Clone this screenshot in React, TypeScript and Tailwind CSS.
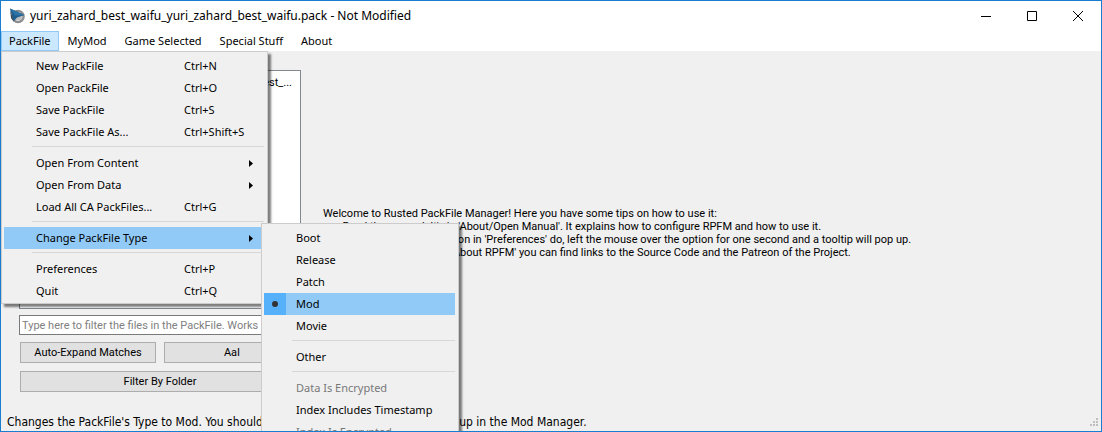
import type { ReactNode } from "react";

const tips = [
  "Welcome to Rusted PackFile Manager! Here you have some tips on how to use it:",
  "     - Read the manual. It's in 'About/Open Manual'. It explains how to configure RPFM and how to use it.",
  "     - To know what each option in 'Preferences' do, left the mouse over the option for one second and a tooltip will pop up.",
  "     - In the 'About' menu, in 'About RPFM' you can find links to the Source Code and the Patreon of the Project.",
];

function AppIcon() {
  return (
    <svg className="size-4" viewBox="0 0 16 16" aria-hidden="true">
      <circle cx="9" cy="8.5" r="5.6" fill="none" stroke="#8d8d8d" strokeWidth="2.4" />
      <circle cx="9" cy="8.5" r="4" fill="#b9bcbf" />
      <path d="M1 0.5 L15.5 7 L8 9.5 L4.5 13.5 Z" fill="#1d5c8c" />
      <path d="M1 0.5 L15.5 7 L6 7.5 Z" fill="#2d73a6" />
      <path d="M1 1 L4.500 13 L2 10 Z" fill="#35444f" />
    </svg>
  );
}

function CaptionButton({ label, children }: { label: string; children: ReactNode }) {
  return (
    <button type="button" aria-label={label} className="flex h-[29px] w-[46px] items-center justify-center">
      <svg className="h-[10px] w-[10px]" viewBox="0 0 10 10" fill="none" stroke="#000" aria-hidden="true">
        {children}
      </svg>
    </button>
  );
}

function MenuSeparator() {
  return <div role="separator" className="mt-[3px] mb-[5px] ml-7 h-px bg-[#d7d7d7]" />;
}

type ItemProps = {
  label: string;
  shortcut?: string;
  arrow?: boolean;
  active?: boolean;
  checked?: boolean;
  disabled?: boolean;
};

function MenuItem({ label, shortcut, arrow, active, checked, disabled }: ItemProps) {
  return (
    <button
      type="button"
      role={checked ? "menuitemradio" : "menuitem"}
      aria-checked={checked}
      disabled={disabled}
      className={`flex h-[22px] w-full items-center text-left disabled:text-[#787878] ${active ? "bg-[#91c9f7]" : ""}`}
    >
      <span className={`mr-[10px] flex size-[22px] shrink-0 items-center justify-center ${checked ? "bg-[#56b0fa]" : ""}`}>
        {checked && <span className="size-[6px] rounded-full bg-[#333]" />}
      </span>
      <span className="flex-1 whitespace-nowrap">{label}</span>
      {shortcut && <span className="w-20 whitespace-nowrap">{shortcut}</span>}
      {arrow && (
        <svg className="mr-[11px] h-[7px] w-1" viewBox="0 0 4 7" aria-hidden="true">
          <path d="M0 0 L4 3.500 L0 7 Z" fill="#000" />
        </svg>
      )}
    </button>
  );
}

const popup =
  "absolute border border-[#ccc] bg-[#f0f0f0] pt-[3px] pr-[3px] pb-px pl-[2px] shadow-[3px_3px_2px_0px_rgba(0,0,0,0.5)]";

function TypeMenu() {
  return (
    <div role="menu" aria-label="Change PackFile Type" className={`${popup} -top-1 left-[257px] w-[198px]`}>
      <MenuItem label="Boot" />
      <MenuItem label="Release" />
      <MenuItem label="Patch" />
      <MenuItem label="Mod" active checked />
      <MenuItem label="Movie" />
      <MenuSeparator />
      <MenuItem label="Other" />
      <MenuSeparator />
      <MenuItem label="Data Is Encrypted" disabled />
      <MenuItem label="Index Includes Timestamp" />
      <MenuItem label="Index Is Encrypted" disabled />
    </div>
  );
}

function PackFileMenu() {
  return (
    <div role="menu" aria-label="PackFile" className={`${popup} top-full left-0 z-10 w-[267px]`}>
      <MenuItem label="New PackFile" shortcut="Ctrl+N" />
      <MenuItem label="Open PackFile" shortcut="Ctrl+O" />
      <MenuItem label="Save PackFile" shortcut="Ctrl+S" />
      <MenuItem label="Save PackFile As..." shortcut="Ctrl+Shift+S" />
      <MenuSeparator />
      <MenuItem label="Open From Content" arrow />
      <MenuItem label="Open From Data" arrow />
      <MenuItem label="Load All CA PackFiles..." shortcut="Ctrl+G" />
      <MenuSeparator />
      <div className="relative">
        <MenuItem label="Change PackFile Type" arrow active />
        <TypeMenu />
      </div>
      <MenuSeparator />
      <MenuItem label="Preferences" shortcut="Ctrl+P" />
      <MenuItem label="Quit" shortcut="Ctrl+Q" />
    </div>
  );
}

const pushButton = "h-[21px] border border-[#adadad] bg-[#e1e1e1] text-center";

export default function App() {
  return (
    <div className="flex h-screen flex-col overflow-hidden border border-[#1a7dcf] bg-[#f0f0f0] font-['Noto_Sans',sans-serif] text-[11px] leading-[16px] text-black">
      <header className="flex h-[30px] shrink-0 items-start bg-white pl-2">
        <div className="flex h-[30px] flex-1 items-center gap-[5px]">
          <AppIcon />
          <h1 className="text-[12px]">yuri_zahard_best_waifu_yuri_zahard_best_waifu.pack - Not Modified</h1>
        </div>
        <CaptionButton label="Minimize">
          <path d="M0 5.500 H10" />
        </CaptionButton>
        <CaptionButton label="Maximize">
          <path d="M0.500 0.500 H9.500 V9.500 H0.500 Z" />
        </CaptionButton>
        <CaptionButton label="Close">
          <path d="M0 0 L10 10 M10 0 L0 10" />
        </CaptionButton>
      </header>

      <nav className="relative flex h-5 shrink-0 bg-white">
        <button type="button" aria-haspopup="menu" aria-expanded="true" className="border border-[#90c8f6] bg-[#cce8ff] px-[7px]">
          PackFile
        </button>
        <button type="button" className="px-[9px]">MyMod</button>
        <button type="button" className="px-[9px]">Game Selected</button>
        <button type="button" className="px-[9px]">Special Stuff</button>
        <button type="button" className="px-[9px]">About</button>
        <PackFileMenu />
      </nav>

      <main className="flex min-h-0 flex-1 font-['Roboto',sans-serif] leading-[13px]">
        <section className="flex w-[300px] shrink-0 flex-col pt-[19px] pl-[18px]">
          <div role="tree" className="min-h-0 flex-1 border border-[#828790] bg-white py-[5px] pr-2 pl-5">
            <div role="treeitem" className="truncate text-right">yuri_zahard_best_waifu_yuri_zahard_best_...</div>
          </div>
          <input
            type="text"
            aria-label="Filter"
            placeholder="Type here to filter the files in the PackFile. Works with Regex too!"
            className="mt-[6px] h-5 border border-[#7a7a7a] bg-white px-[2px] placeholder:text-[#808080]"
          />
          <div className="mt-[7px] flex gap-2 px-px">
            <button type="button" className={`${pushButton} flex-1`}>Auto-Expand Matches</button>
            <button type="button" className={`${pushButton} flex-1`}>AaI</button>
          </div>
          <button type="button" className={`${pushButton} mx-px mt-2 mb-[21px]`}>Filter By Folder</button>
        </section>
        <section className="flex min-w-0 flex-1 items-center pt-[2px] pl-[22px]">
          <div className="whitespace-pre">
            {tips.map((tip) => (
              <p key={tip}>{tip}</p>
            ))}
          </div>
        </section>
      </main>

      <footer className="flex h-[18px] shrink-0 items-center justify-between pr-[2px] pl-[6px]">
        <p className="whitespace-nowrap font-['DejaVu_Sans_Condensed',sans-serif] text-[12px]">
          Changes the PackFile's Type to Mod. You should use this for mods that should show up in the Mod Manager.
        </p>
        <svg className="size-[9px]" viewBox="0 0 9 9" fill="#bfbfbf" aria-hidden="true">
          <path d="M6 0h2v2h-2z M3 3h2v2h-2z M6 3h2v2h-2z M0 6h2v2h-2z M3 6h2v2h-2z M6 6h2v2h-2z" />
        </svg>
      </footer>
    </div>
  );
}
